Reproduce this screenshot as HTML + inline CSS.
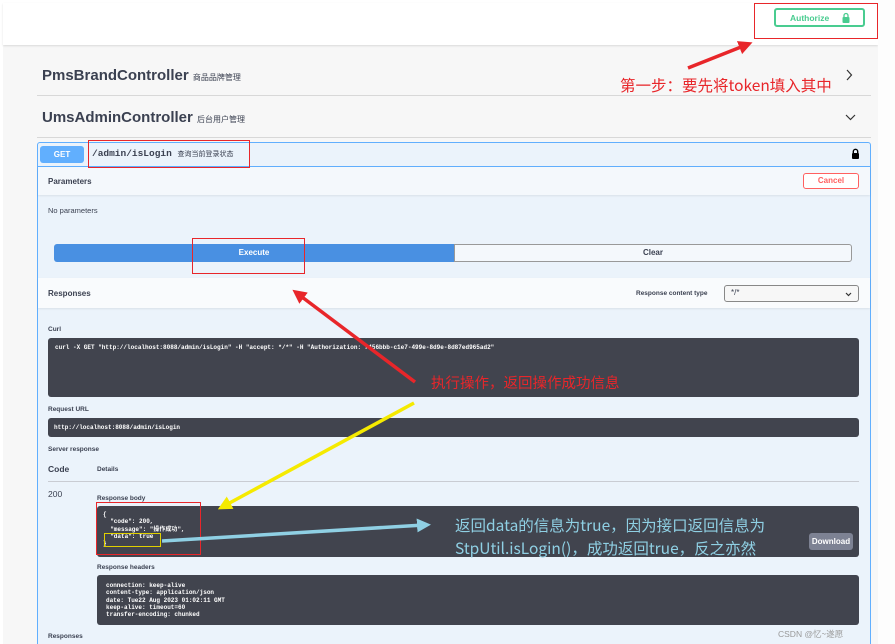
<!DOCTYPE html>
<html><head><meta charset="utf-8">
<style>
*{margin:0;padding:0;box-sizing:border-box}
html,body{width:895px;height:644px;overflow:hidden}
body{background:#f7f7f7;font-family:"Liberation Sans","Noto Sans CJK SC",sans-serif;position:relative;color:#3b4151}
.a{position:absolute}
.mono{font-family:"Liberation Mono","Noto Sans CJK SC",monospace}
.dark{background:#41444e;border-radius:3px;color:#fff;font-size:6px;font-weight:bold}
.lbl{font-size:7.5px;font-weight:bold;color:#3b4151}
.cn{font-family:"Noto Sans CJK SC",sans-serif}
.ann{z-index:5}
</style></head><body>
<div class="a" style="left:0;top:0;width:895px;height:3px;background:#fff"></div>
<div class="a" style="left:0;top:0;width:3px;height:644px;background:#fff"></div>
<div class="a" style="left:3px;top:3px;width:875px;height:42px;background:#fff;box-shadow:0 1px 2px rgba(0,0,0,.12)"></div>
<div class="a" style="left:878px;top:0;width:17px;height:644px;background:#fdfdfd"></div>
<div class="a" style="left:774px;top:8px;width:91px;height:19px;border:2px solid #49cc90;border-radius:3px;color:#49cc90;font-size:8.5px;font-weight:bold;padding:3px 0 0 14px">Authorize
<svg class="a" style="left:66px;top:2px" width="8" height="11" viewBox="0 0 8 11"><path d="M2 5V3.5a2 2 0 0 1 4 0V5" stroke="#49cc90" fill="none" stroke-width="1.3"/><rect x="0.5" y="5" width="7" height="6" rx="1" fill="#49cc90"/></svg></div>

<div class="a" style="left:42px;top:67px;font-size:15px;font-weight:bold;color:#3b4151">PmsBrandController <span class="cn" style="font-size:8px;font-weight:normal">商品品牌管理</span></div>
<svg class="a" style="left:846px;top:69px" width="7" height="12"><path d="M1 1l4.5 5L1 11" stroke="#333" fill="none" stroke-width="1.2"/></svg>
<div class="a" style="left:37px;top:95px;width:834px;height:1px;background:#d8d8d8"></div>
<div class="a" style="left:42px;top:109px;font-size:15px;font-weight:bold;color:#3b4151">UmsAdminController <span class="cn" style="font-size:8px;font-weight:normal">后台用户管理</span></div>
<svg class="a" style="left:845px;top:114px" width="11" height="7"><path d="M1 1l4.5 4.5L10 1" stroke="#333" fill="none" stroke-width="1.2"/></svg>
<div class="a" style="left:37px;top:137px;width:834px;height:1px;background:#d8d8d8"></div>

<div class="a" style="left:37px;top:142px;width:834px;height:510px;border:1px solid #61affe;border-radius:3px;background:#ebf3fb"></div>
<div class="a" style="left:38px;top:166px;width:832px;height:1px;background:#61affe"></div>
<div class="a" style="left:40px;top:146px;width:44px;height:17px;background:#61affe;border-radius:3px;color:#fff;font-size:8px;font-weight:bold;text-align:center;line-height:17px">GET</div>
<div class="a mono" style="left:92px;top:148px;font-size:9.5px;font-weight:bold;color:#3b4151">/admin/isLogin <span class="cn" style="font-size:7px;font-weight:normal">查询当前登录状态</span></div>
<svg class="a" style="left:851px;top:148px" width="9" height="11" viewBox="0 0 9 11"><path d="M2.3 5V3.5a2.2 2.2 0 0 1 4.4 0V5" stroke="#000" fill="none" stroke-width="1.4"/><rect x="1" y="5" width="7" height="6" rx="1"/></svg>
<div class="a" style="left:38px;top:167px;width:832px;height:28px;background:#f4f8fc;box-shadow:0 1px 2px rgba(0,0,0,.08)"></div>
<div class="a lbl" style="left:48px;top:177px;font-size:8px">Parameters</div>
<div class="a" style="left:803px;top:173px;width:56px;height:16px;border:1px solid #ff6060;border-radius:3px;background:#fff;color:#ff6060;font-size:8px;font-weight:bold;text-align:center;line-height:14px">Cancel</div>
<div class="a" style="left:48px;top:206px;font-size:7.5px;color:#3b4151">No parameters</div>

<div class="a" style="left:54px;top:244px;width:400px;height:18px;background:#4990e2;border-radius:3px 0 0 3px;color:#fff;font-size:8px;font-weight:bold;text-align:center;line-height:18px">Execute</div>
<div class="a" style="left:454px;top:244px;width:398px;height:18px;background:#f4f8fc;border:1px solid #999;border-radius:0 3px 3px 0;color:#3b4151;font-size:8px;font-weight:bold;text-align:center;line-height:16px">Clear</div>

<div class="a" style="left:38px;top:278px;width:832px;height:30px;background:#f9fbfd;box-shadow:0 1px 2px rgba(0,0,0,.08)"></div>
<div class="a lbl" style="left:48px;top:289px;font-size:8px">Responses</div>
<div class="a lbl" style="left:636px;top:290px;font-size:6.5px">Response content type</div>
<div class="a" style="left:724px;top:285px;width:135px;height:17px;border:1px solid #888;border-radius:3px;background:#f7f7f7;font-size:8px;padding:2px 0 0 6px">*/*<svg class="a" style="right:6px;top:6px" width="7" height="5"><path d="M1 1l2.5 2.5L6 1" stroke="#333" fill="none" stroke-width="1.2"/></svg></div>

<div class="a lbl" style="left:48px;top:326px;font-size:6.5px">Curl</div>
<div class="a dark mono" style="left:48px;top:338px;width:811px;height:59px;padding:6px 7px;white-space:nowrap">curl -X GET "http://localhost:8088/admin/isLogin" -H "accept: */*" -H "Authorization: 7456bbb-c1e7-499e-8d9e-8d87ed965ad2"</div>
<div class="a lbl" style="left:48px;top:406px;font-size:6.5px">Request URL</div>
<div class="a dark mono" style="left:48px;top:418px;width:811px;height:19px;padding:6px 6px">http://localhost:8088/admin/isLogin</div>
<div class="a lbl" style="left:48px;top:446px;font-size:6.5px">Server response</div>
<div class="a lbl" style="left:48px;top:464px;font-size:8.5px">Code</div>
<div class="a lbl" style="left:97px;top:466px;font-size:6.5px">Details</div>
<div class="a" style="left:48px;top:481px;width:811px;height:1px;background:#c9ccd3"></div>
<div class="a" style="left:48px;top:489px;font-size:8.5px;color:#3b4151">200</div>
<div class="a lbl" style="left:97px;top:495px;font-size:6.5px">Response body</div>
<div class="a dark mono" style="left:97px;top:506px;width:762px;height:51px;padding:5px 6px;line-height:7px;white-space:pre">{
  "code": 200,
  "message": "<span class="cn">操作成功</span>",
  "data": true
}</div>
<div class="a" style="left:809px;top:533px;width:44px;height:17px;background:#7d8293;border-radius:3px;color:#fff;font-size:8px;font-weight:bold;text-align:center;line-height:17px">Download</div>
<div class="a lbl" style="left:97px;top:564px;font-size:6.5px">Response headers</div>
<div class="a dark mono" style="left:97px;top:575px;width:762px;height:50px;padding:7px 9px;line-height:7.3px;white-space:pre">connection: keep-alive
content-type: application/json
date: Tue22 Aug 2023 01:02:11 GMT
keep-alive: timeout=60
transfer-encoding: chunked</div>
<div class="a lbl" style="left:48px;top:633px;font-size:6.5px">Responses</div>
<div class="a" style="left:778px;top:628px;font-size:8.5px;color:#999">CSDN @<span class="cn">忆~遂愿</span></div>

<!-- annotations -->
<div class="a ann" style="left:754px;top:3px;width:124px;height:36px;border:1.5px solid #e8262a"></div>
<div class="a ann" style="left:88px;top:140px;width:162px;height:28px;border:1.5px solid #e8262a"></div>
<div class="a ann" style="left:192px;top:238px;width:113px;height:36px;border:1.5px solid #e8262a"></div>
<div class="a ann" style="left:96px;top:502px;width:105px;height:53px;border:1.5px solid #e8262a"></div>
<div class="a ann" style="left:104px;top:533px;width:57px;height:14px;border:1.5px solid #e0d000"></div>
<svg class="a ann" style="left:0;top:0" width="895" height="644">
<defs>
<marker id="r" markerWidth="4" markerHeight="4" refX="2" refY="2" orient="auto"><path d="M0 0L4 2L0 4z" fill="#e8262a"/></marker>
<marker id="y" markerWidth="4" markerHeight="4" refX="2" refY="2" orient="auto"><path d="M0 0L4 2L0 4z" fill="#f5ea00"/></marker>
<marker id="b" markerWidth="4" markerHeight="4" refX="2" refY="2" orient="auto"><path d="M0 0L4 2L0 4z" fill="#8fd0e4"/></marker>
</defs>
<line x1="688" y1="68" x2="746" y2="45" stroke="#e8262a" stroke-width="3.5" marker-end="url(#r)"/>
<line x1="415" y1="382" x2="298" y2="294" stroke="#e8262a" stroke-width="3.5" marker-end="url(#r)"/>
<line x1="414" y1="403" x2="224" y2="506" stroke="#f5ea00" stroke-width="3.5" marker-end="url(#y)"/>
<line x1="162" y1="541" x2="424" y2="525" stroke="#8fd0e4" stroke-width="3.5" marker-end="url(#b)"/>
</svg>
<div class="a cn ann" style="left:620px;top:74px;font-size:15.5px;color:#e8262a;white-space:nowrap">第一步：要先将token填入其中</div>
<div class="a cn ann" style="left:431px;top:372px;font-size:14.5px;color:#e8262a;white-space:nowrap">执行操作，返回操作成功信息</div>
<div class="a cn ann" style="left:455px;top:514px;font-size:15.5px;color:#8fd0e4;white-space:nowrap">返回data的信息为true，因为接口返回信息为</div>
<div class="a cn ann" style="left:455px;top:537px;font-size:15.5px;color:#8fd0e4;white-space:nowrap">StpUtil.isLogin()，成功返回true，反之亦然</div>
</body></html>
